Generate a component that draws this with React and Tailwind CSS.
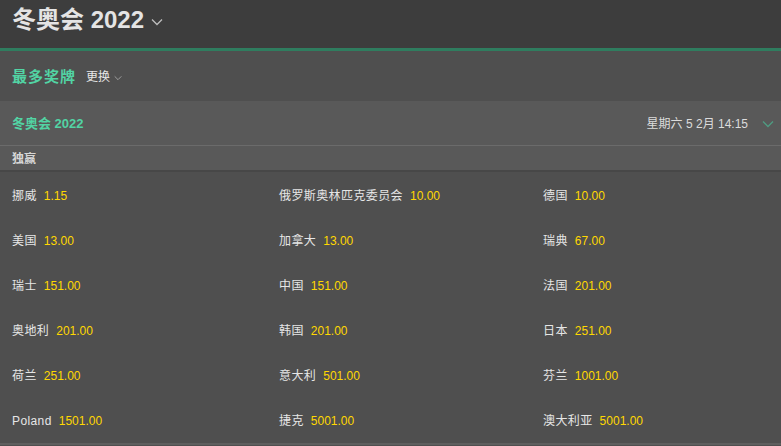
import React from 'react';

const font = { fontFamily: '"Liberation Sans", "Noto Sans CJK SC", sans-serif' };

const rows = [
    [['挪威', '1.15'], ['俄罗斯奥林匹克委员会', '10.00'], ['德国', '10.00']],
    [['美国', '13.00'], ['加拿大', '13.00'], ['瑞典', '67.00']],
    [['瑞士', '151.00'], ['中国', '151.00'], ['法国', '201.00']],
    [['奥地利', '201.00'], ['韩国', '201.00'], ['日本', '251.00']],
    [['荷兰', '251.00'], ['意大利', '501.00'], ['芬兰', '1001.00']],
    [['Poland', '1501.00'], ['捷克', '5001.00'], ['澳大利亚', '5001.00']],
];

function Chevron({ className }) {
    return (
        <svg className={className} viewBox="0 0 12 8" fill="none" stroke="currentColor" strokeWidth="1.3">
            <path d="M1 1.5l5 5 5-5" />
        </svg>
    );
}

export default function App() {
    return (
        <div className="w-[781px] h-[446px] overflow-hidden bg-[#4f4f4f]" style={font}>
            <div className="h-12 bg-[#3d3d3d] flex items-center px-3 pb-2">
                <span className="text-[24px] font-bold text-[#e4e4e4] leading-none">冬奥会 2022</span>
                <Chevron className="w-[12px] h-[8px] ml-[7px] mt-[3px] text-[#bdbdbd]" />
            </div>
            <div className="h-[3px] bg-[#2f7d5f]" />
            <div className="h-[50px] flex items-center px-3 pt-[2px]">
                <span className="text-[15px] font-bold tracking-[1px] text-[#52d4a4]">最多奖牌</span>
                <span className="text-[12px] text-[#e6e6e6] ml-[10px]">更换</span>
                <Chevron className="w-[8px] h-[6px] ml-[4px] mt-[2px] text-[#a9a9a9]" />
            </div>
            <div className="h-[45px] bg-[#595959] flex items-center pl-3 pr-[7px] pt-[2px] border-b border-[#6b6b6b]">
                <span className="text-[13px] font-bold text-[#52d4a4]">冬奥会 2022</span>
                <span className="ml-auto text-[12px] text-[#dcdcdc]">星期六 5 2月 14:15</span>
                <Chevron className="w-[12px] h-[8px] ml-[14px] text-[#4f9c82]" />
            </div>
            <div className="h-[24px] bg-[#595959] flex items-center px-3 pt-[2px]">
                <span className="text-[12px] font-bold text-[#d6d6d6]">独赢</span>
            </div>
            <div className="h-[2px] bg-[#474747]" />
            <div className="border-b-2 border-[#5e5e5e] pt-[1px]">
                {rows.map((row, i) => (
                    <div key={i} className="h-[45px] grid grid-cols-[267px_264px_1fr] items-center px-3">
                        {row.map(([name, odds]) => (
                            <div key={name} className="text-[12px] whitespace-nowrap">
                                <span className="text-[#e6e6e6] tracking-[0.4px]">{name}</span>
                                <span className="text-[#ffd800] ml-[7px]">{odds}</span>
                            </div>
                        ))}
                    </div>
                ))}
            </div>
        </div>
    );
}
